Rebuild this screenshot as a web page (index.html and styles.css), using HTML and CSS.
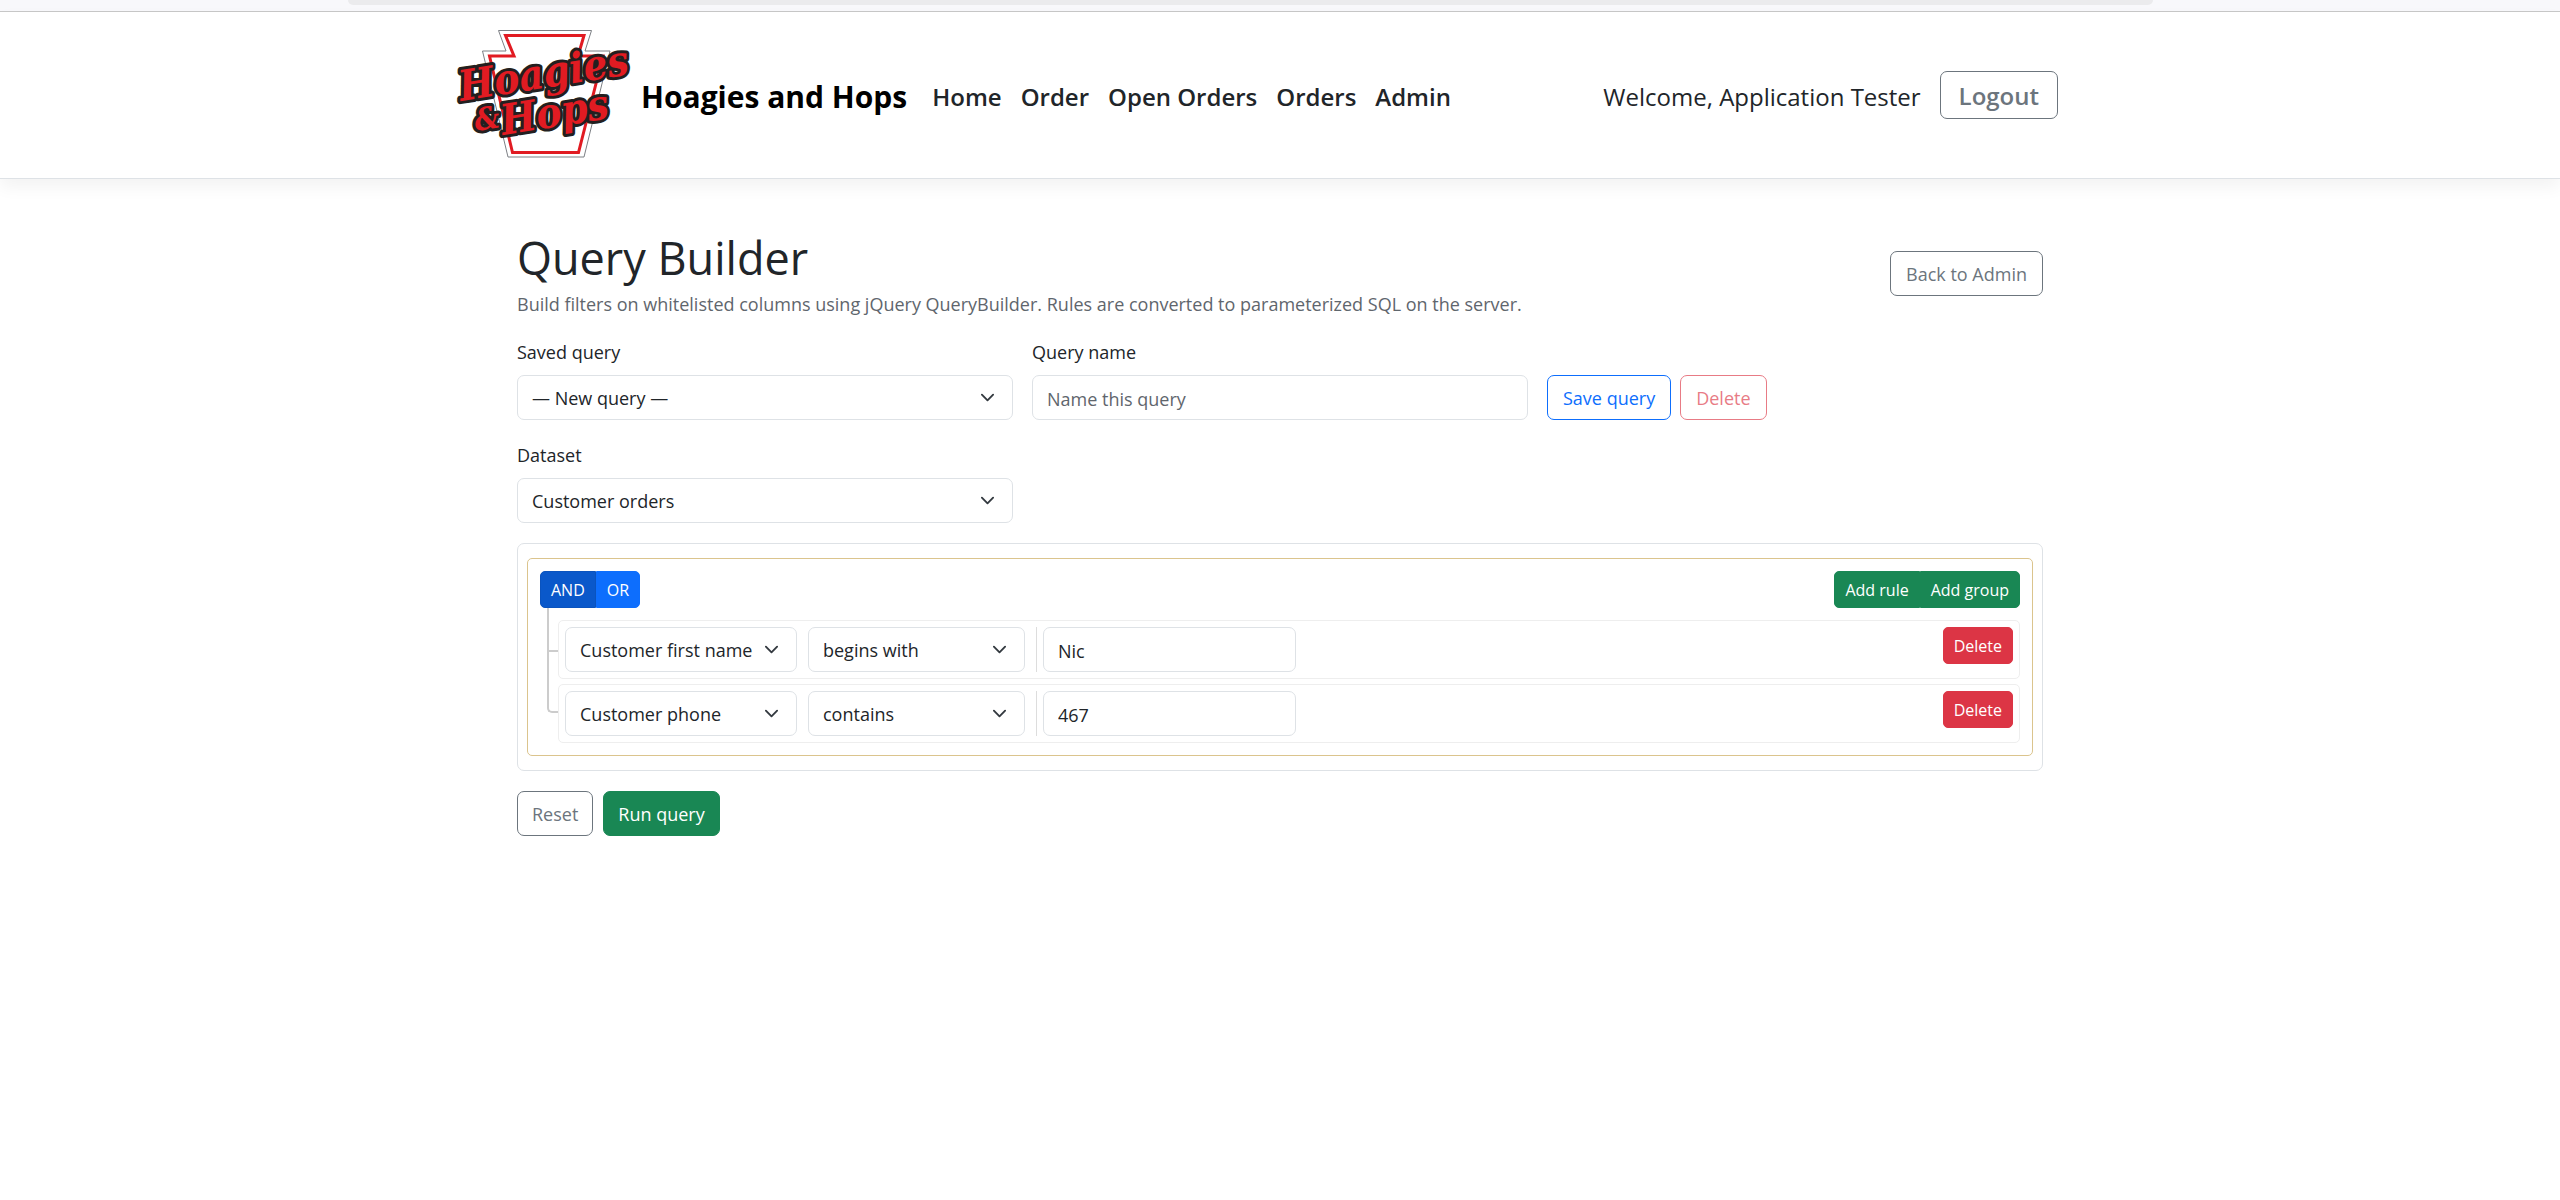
FILE: index.html
```html
<!DOCTYPE html>
<html lang="en">
<head>
<meta charset="utf-8">
<meta name="viewport" content="width=device-width, initial-scale=1">
<title>Query Builder - Hoagies and Hops</title>
<link rel="stylesheet" href="styles.css">
</head>
<body>
<div class="top-strip"><div class="top-strip-pill"></div></div>
<header class="navbar">
  <div class="navbar-inner">
    <a class="brand" href="#">
      <svg class="brand-logo" width="176" height="134" viewBox="0 4 176 134" role="img" aria-label="Hoagies &amp; Hops logo">
        <path class="keystone-outer" d="M41.500 6.500H134.500L128 27H153L127 133H51L25.500 27H49Z"/>
        <path class="keystone-inner" d="M48.500 11.500H127L121 32H146L121.500 128.500H55.500L32.500 32H57Z"/>
        <g class="logo-lettering">
          <text x="4" y="77" transform="rotate(-9 4 77)" class="logo-word">Hoagies</text>
          <text x="19" y="107" transform="rotate(-9 19 107)" class="logo-amp">&amp;</text>
          <text x="46" y="111" transform="rotate(-9 46 111)" class="logo-word">Hops</text>
        </g>
      </svg>
      <span class="brand-name">Hoagies and Hops</span>
    </a>
    <nav class="nav-links">
      <a href="#">Home</a>
      <a href="#">Order</a>
      <a href="#">Open Orders</a>
      <a href="#">Orders</a>
      <a href="#">Admin</a>
    </nav>
    <div class="account">
      <span class="welcome">Welcome, Application Tester</span>
      <button type="button" class="btn btn-outline-secondary btn-logout">Logout</button>
    </div>
  </div>
</header>

<main class="content">
  <div class="page-head">
    <div>
      <h1>Query Builder</h1>
      <p class="lead">Build filters on whitelisted columns using jQuery QueryBuilder. Rules are converted to parameterized SQL on the server.</p>
    </div>
    <a class="btn btn-outline-secondary" href="#">Back to Admin</a>
  </div>

  <div class="form-grid">
    <div class="field">
      <label for="saved">Saved query</label>
      <select id="saved" class="control select"><option>— New query —</option></select>
    </div>
    <div class="field">
      <label for="name">Query name</label>
      <input id="name" class="control" type="text" placeholder="Name this query">
    </div>
    <div class="field-actions">
      <button type="button" class="btn btn-outline-primary">Save query</button>
      <button type="button" class="btn btn-outline-danger" disabled>Delete</button>
    </div>
    <div class="field">
      <label for="dataset">Dataset</label>
      <select id="dataset" class="control select"><option>Customer orders</option></select>
    </div>
  </div>

  <section class="builder">
    <div class="rules-group">
      <div class="group-head">
        <div class="btn-group">
          <button type="button" class="btn btn-sm btn-primary active">AND</button>
          <button type="button" class="btn btn-sm btn-primary">OR</button>
        </div>
        <div class="btn-group">
          <button type="button" class="btn btn-sm btn-success">Add rule</button>
          <button type="button" class="btn btn-sm btn-success">Add group</button>
        </div>
      </div>
      <ul class="rules">
        <li class="rule">
          <select class="control select rule-filter" aria-label="Field"><option>Customer first name</option></select>
          <select class="control select rule-operator" aria-label="Operator"><option>begins with</option></select>
          <div class="rule-value"><input class="control" type="text" value="Nic" aria-label="Value"></div>
          <button type="button" class="btn btn-sm btn-danger">Delete</button>
        </li>
        <li class="rule">
          <select class="control select rule-filter" aria-label="Field"><option>Customer phone</option></select>
          <select class="control select rule-operator" aria-label="Operator"><option>contains</option></select>
          <div class="rule-value"><input class="control" type="text" value="467" aria-label="Value"></div>
          <button type="button" class="btn btn-sm btn-danger">Delete</button>
        </li>
      </ul>
    </div>
  </section>

  <div class="actions">
    <button type="button" class="btn btn-outline-secondary">Reset</button>
    <button type="button" class="btn btn-success">Run query</button>
  </div>
</main>
</body>
</html>
```

FILE: styles.css
```css
*, *::before, *::after { box-sizing: border-box; }

body {
  margin: 0;
  background: #fff;
  color: #212529;
  font-family: "Open Sans", "Noto Sans", sans-serif;
  font-size: 18px;
  line-height: 28px;
}

a { color: inherit; text-decoration: none; }
button, input, select { font: inherit; color: inherit; }

.top-strip {
  height: 12px;
  background: #f8f8fb;
  border-bottom: 1px solid #c8c8c8;
}
.top-strip-pill {
  width: 1805px;
  max-width: 80%;
  height: 5px;
  margin-left: 348px;
  background: #ebebed;
  border-radius: 0 0 10px 10px;
}

.navbar {
  border-bottom: 1px solid #dee2e6;
  box-shadow: 0 8px 16px rgba(0, 0, 0, 0.05);
}
.navbar-inner {
  display: flex;
  align-items: center;
  max-width: 1646px;
  margin: 0 auto;
  padding: 16px 45px 16px 0;
  font-size: 24px;
}
.brand {
  display: flex;
  align-items: center;
  gap: 8px;
  color: #000;
  font-size: 30px;
  font-weight: 700;
}
.brand-logo { display: block; flex: none; overflow: visible; }
.brand-name, .nav-links, .welcome { padding-top: 3px; white-space: nowrap; }

.keystone-outer { fill: #fff; stroke: #7d8085; stroke-width: 1; }
.keystone-inner { fill: none; stroke: #e11b22; stroke-width: 3; }
.logo-lettering {
  fill: #e11b22;
  stroke: #231f20;
  stroke-width: 6px;
  stroke-linejoin: round;
  paint-order: stroke;
  font-family: "DejaVu Serif Condensed", "DejaVu Serif", serif;
  font-weight: 700;
  font-style: italic;
}
.logo-word { font-size: 42px; }
.logo-amp { font-size: 31px; }

.nav-links {
  display: flex;
  gap: 19px;
  margin-left: 25px;
  font-weight: 600;
}
.account {
  display: flex;
  align-items: center;
  gap: 19px;
  margin-left: auto;
}

.btn {
  display: inline-block;
  padding: 9px 15px 7px;
  border: 1px solid transparent;
  border-radius: 7px;
  background: transparent;
  line-height: 27px;
  white-space: nowrap;
  cursor: pointer;
}
.btn-sm { padding: 5px 10px 3px; font-size: 16px; border-radius: 5px; }
.btn-logout { padding: 10px 18px 8px; font-size: 24px; font-weight: 600; line-height: 28px; }
.btn-outline-secondary { border-color: #6c757d; color: #6c757d; }
.btn-outline-primary { border-color: #0d6efd; color: #0d6efd; }
.btn-outline-danger { border-color: #dc3545; color: #dc3545; }
.btn:disabled { opacity: 0.65; }
.btn-primary { background: #0d6efd; border-color: #0d6efd; color: #fff; }
.btn-primary.active { background: #0a58ca; border-color: #0a53be; }
.btn-success { background: #198754; border-color: #198754; color: #fff; }
.btn-danger { background: #dc3545; border-color: #dc3545; color: #fff; }
.btn-group { display: flex; }
.btn-group .btn:first-child { border-radius: 5px 0 0 5px; }
.btn-group .btn:last-child { border-radius: 0 5px 5px 0; }

.content { max-width: 1526px; margin: 0 auto; padding: 50px 0; }

.page-head {
  display: flex;
  align-items: center;
  justify-content: space-between;
  margin-bottom: 20px;
}
h1 { margin: 0 0 3px; font-size: 45px; font-weight: 400; line-height: 58px; }
.lead { margin: 0; color: #5f666d; }

.form-grid {
  display: grid;
  grid-template-columns: repeat(2, minmax(0, 496px)) 1fr;
  gap: 21px 19px;
  align-items: end;
}
.form-grid > :nth-child(4) { grid-column: 1; }
.field { display: flex; flex-direction: column; gap: 9px; }
.field-actions { display: flex; gap: 9px; }

.control {
  width: 100%;
  margin: 0;
  padding: 9px 14px 7px;
  border: 1px solid #dee2e6;
  border-radius: 7px;
  background: #fff;
  line-height: 27px;
  height: 45px;
}
.control::placeholder { color: #5f666d; opacity: 1; }
.select {
  appearance: none;
  padding-right: 42px;
  background: #fff url("data:image/svg+xml,%3Csvg xmlns='http://www.w3.org/2000/svg' viewBox='0 0 16 16'%3E%3Cpath fill='none' stroke='%23343a40' stroke-linecap='round' stroke-linejoin='round' stroke-width='2' d='m2 5 6 6 6-6'/%3E%3C/svg%3E") no-repeat right 17px center / 15px 15px;
}

.builder {
  margin-top: 20px;
  padding: 14px 9px;
  border: 1px solid #dee2e6;
  border-radius: 7px;
}
.rules-group {
  padding: 12px;
  border: 1px solid #dbc48d;
  border-radius: 5px;
}
.group-head { display: flex; justify-content: space-between; margin-bottom: 12px; }

.rules {
  display: flex;
  flex-direction: column;
  gap: 5px;
  margin: 0;
  padding: 0 0 0 18px;
  list-style: none;
}
.rule {
  position: relative;
  display: flex;
  align-items: flex-start;
  padding: 6px;
  border: 1px solid #eee;
  border-radius: 5px;
}
/* connector lines from the condition buttons to each rule */
.rule::before {
  content: "";
  position: absolute;
  left: -12px;
  top: -13px;
  width: 11px;
  height: 44px;
  border: solid #ccc;
  border-width: 0 0 2px 2px;
}
.rule:last-child::before { top: -35px; height: 63px; border-radius: 0 0 0 5px; }
.rule-filter { width: 232px; margin-right: 11px; }
.rule-operator { width: 217px; margin-right: 11px; }
.rule-value { padding-left: 6px; border-left: 1px solid #ddd; }
.rule-value .control { width: 253px; display: block; }
.rule .btn { margin-left: auto; }

.actions { display: flex; gap: 10px; margin-top: 20px; }
.actions .btn { padding-left: 14px; padding-right: 14px; }
```
